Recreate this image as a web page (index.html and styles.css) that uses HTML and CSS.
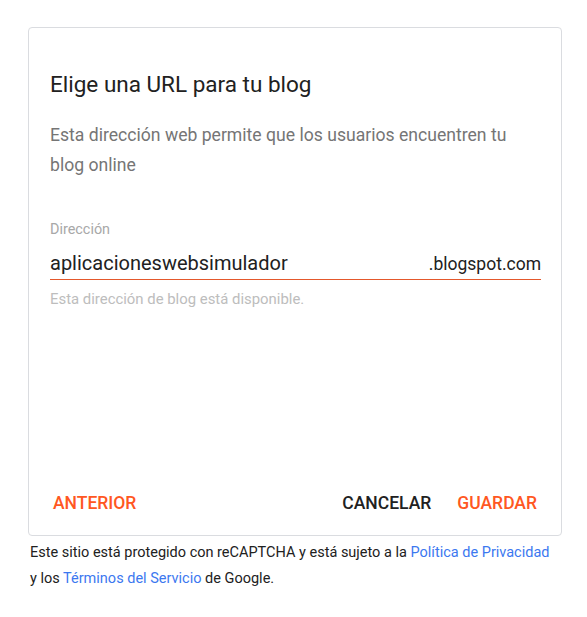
FILE: index.html
```html
<!DOCTYPE html>
<html lang="es">
<head>
<meta charset="utf-8">
<title>Elige una URL para tu blog</title>
<link rel="stylesheet" href="styles.css">
</head>
<body>
<div class="page">
  <div class="card">
    <h1 class="title">Elige una URL para tu blog</h1>
    <p class="desc">Esta dirección web permite que los usuarios encuentren tu blog online</p>
    <div class="field">
      <div class="label">Dirección</div>
      <div class="input-row">
        <span class="value">aplicacioneswebsimulador</span>
        <span class="suffix">.blogspot.com</span>
      </div>
      <div class="helper">Esta dirección de blog está disponible.</div>
    </div>
    <div class="actions">
      <span class="btn accent">ANTERIOR</span>
      <span class="spacer"></span>
      <span class="btn dark">CANCELAR</span>
      <span class="btn accent">GUARDAR</span>
    </div>
  </div>
  <p class="legal">Este sitio está protegido con reCAPTCHA y está sujeto a la <a href="#">Política de Privacidad</a> y los <a href="#">Términos del Servicio</a> de Google.</p>
</div>
</body>
</html>
```

FILE: styles.css
```css
* { box-sizing: border-box; }
html, body { margin: 0; padding: 0; background: #fff; }
body { font-family: Roboto, "Noto Sans", Arial, sans-serif; color: #212121; }

.page {
  width: 587px;
  padding: 27px 26px 0 28px;
}

.card {
  width: 534px;
  height: 509px;
  border: 1px solid #dadce0;
  border-radius: 4px;
  padding: 0 20px 0 21px;
  display: flex;
  flex-direction: column;
}

.title {
  margin: 41px 0 0;
  font-size: 22.5px;
  font-weight: 400;
  line-height: 30px;
  color: #212121;
}

.desc {
  max-width: 478px;
  margin: 21px 0 0;
  font-size: 17.6px;
  line-height: 30px;
  color: #757575;
}

.field { margin-top: 41px; }

.label {
  font-size: 14.4px;
  line-height: 18px;
  color: #a8a8a8;
}

.input-row {
  display: flex;
  justify-content: space-between;
  align-items: baseline;
  margin-top: 11px;
  padding-bottom: 2px;
  border-bottom: 1px solid #e4582c;
}

.value { font-size: 20px; line-height: 26px; color: #212121; }
.suffix { font-size: 17.5px; line-height: 26px; color: #212121; }

.helper {
  margin-top: 10px;
  font-size: 14.9px;
  line-height: 18px;
  color: #bdbdbd;
}

.actions {
  margin-top: auto;
  margin-bottom: 20px;
  display: flex;
  align-items: center;
  padding: 0 4px 0 3px;
}

.spacer { flex: 1; }

.btn {
  font-size: 17.5px;
  font-weight: 500;
  line-height: 24px;
}
.btn + .btn { margin-left: 26px; }
.accent { color: #ff5722; }
.dark { color: #212121; }

.legal {
  width: 526px;
  margin: 4px 0 0 2px;
  font-size: 14.5px;
  line-height: 26px;
  color: #212121;
}
.legal a { color: #3c78f0; text-decoration: none; }
```
